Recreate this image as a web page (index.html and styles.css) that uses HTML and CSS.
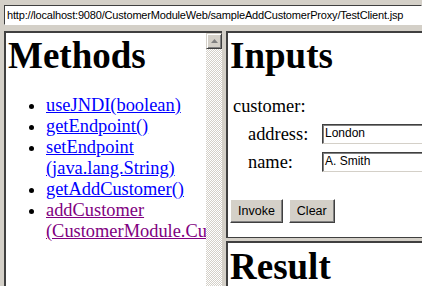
FILE: index.html
```html
<!DOCTYPE html>
<html>
<head>
<meta charset="utf-8">
<link rel="stylesheet" href="styles.css">
</head>
<body>
<div class="urlbar">
  <div class="url">http://localhost:9080/CustomerModuleWeb/sampleAddCustomerProxy/TestClient.jsp</div>
</div>
<div class="frames">
  <div class="frame methods">
    <div class="page">
      <h1>Methods</h1>
      <ul class="list">
        <li><a href="#">useJNDI(boolean)</a></li>
        <li><a href="#">getEndpoint()</a></li>
        <li><a href="#">setEndpoint<br>(java.lang.String)</a></li>
        <li><a href="#">getAddCustomer()</a></li>
        <li><a href="#" class="visited">addCustomer<br>(CustomerModule.Customer)</a></li>
      </ul>
    </div>
    <div class="scrollbar">
      <div class="sb-up"><svg width="7" height="4" viewBox="0 0 7 4"><polygon points="3.5,0 7,4 0,4" fill="#808080"/></svg></div>
      <div class="sb-track"></div>
    </div>
  </div>
  <div class="column">
    <div class="frame inputs">
      <h1>Inputs</h1>
      <div class="fields">
        <span class="customer">customer:</span>
        <span></span><span class="label">address:</span><div class="field">London</div>
        <span></span><span class="label">name:</span><div class="field">A. Smith</div>
      </div>
      <div class="buttons">
        <button class="btn">Invoke</button>
        <button class="btn">Clear</button>
      </div>
    </div>
    <div class="frame result">
      <h1>Result</h1>
    </div>
  </div>
</div>
</body>
</html>
```
FILE: styles.css
```css
html, body {
  margin: 0;
  padding: 0;
  overflow: hidden;
}
body {
  width: 422px;
  height: 286px;
  background: #d4d0c8;
  font-family: "Liberation Serif", serif;
}
.urlbar {
  height: 31px;
  box-sizing: border-box;
  padding: 5px 0 0 4px;
}
.url {
  height: 20px;
  box-sizing: border-box;
  border: 1px solid;
  border-color: #404040 #ffffff #ffffff #404040;
  background: #fff;
  font: 11px/18px "Liberation Sans", sans-serif;
  letter-spacing: -0.18px;
  color: #000;
  padding-left: 2px;
  white-space: nowrap;
  overflow: hidden;
}
.frames {
  display: flex;
  gap: 4px;
  padding-left: 4px;
  height: 255px;
}
.frame {
  background: #fff;
  border-top: 2px solid #404040;
  border-left: 2px solid #404040;
  box-sizing: border-box;
}
.methods {
  width: 218px;
  display: flex;
  flex: none;
}
.page {
  flex: 1;
  overflow: hidden;
  padding-left: 2px;
  min-width: 0;
}
h1 {
  margin: 2px 0 0;
  font: bold 37px/42px "Liberation Serif", serif;
  color: #000;
}
.list {
  margin: 18px 0 0;
  padding-left: 38px;
  font-size: 18.4px;
  line-height: 21px;
  white-space: nowrap;
}
.list a {
  color: #0000ff;
  text-decoration: underline;
}
.list a.visited {
  color: #800080;
}
.scrollbar {
  width: 16px;
  flex: none;
  display: flex;
  flex-direction: column;
}
.sb-up {
  height: 16px;
  box-sizing: border-box;
  background: #d4d0c8;
  border: 1px solid;
  border-color: #d4d0c8 #404040 #404040 #d4d0c8;
  box-shadow: inset 1px 1px #ffffff, inset -1px -1px #808080;
  display: flex;
  align-items: center;
  justify-content: center;
}
.sb-track {
  flex: 1;
  background: repeating-conic-gradient(#ffffff 0 25%, #d4d0c8 0 50%) 0 0 / 2px 2px;
}
.column {
  display: flex;
  flex-direction: column;
  gap: 3px;
  width: 200px;
  flex: none;
}
.inputs {
  height: 207px;
  flex: none;
  border-bottom: 1px solid #404040;
  padding-left: 2px;
}
.fields {
  display: grid;
  grid-template-columns: 15px 74px 110px;
  grid-template-rows: 21px 22px 22px;
  row-gap: 6px;
  align-items: center;
  margin: 19px 0 0 3px;
  font-size: 18.4px;
  line-height: 21px;
  color: #000;
}
.customer {
  grid-column: 1 / -1;
}
.field {
  height: 20px;
  box-sizing: border-box;
  border: 1px solid;
  border-color: #404040 #d4d0c8 #d4d0c8 #404040;
  box-shadow: inset 1px 1px #808080;
  font: 12px/17px "Liberation Sans", sans-serif;
  padding-left: 2px;
  white-space: nowrap;
  width: 104px;
}
.buttons {
  display: flex;
  gap: 6px;
  margin-top: 26px;
}
.btn {
  height: 24px;
  padding: 0 7px;
  margin: 0;
  font: 12.5px "Liberation Sans", sans-serif;
  color: #000;
  background: #d4d0c8;
  border: 1px solid;
  border-color: #ffffff #404040 #404040 #ffffff;
  box-shadow: inset -1px -1px #808080;
}
.result {
  flex: 1;
  padding-left: 2px;
}
.result h1 {
  margin-top: 3px;
}
```
